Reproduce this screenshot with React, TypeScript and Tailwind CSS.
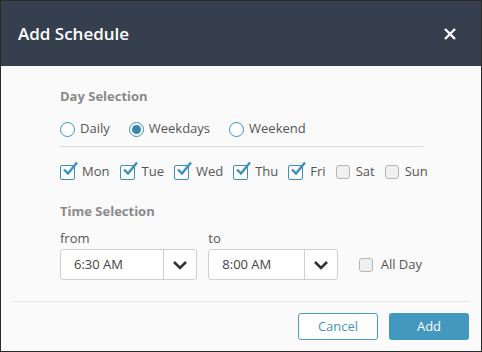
import { useState } from "react";

const days = ["Mon", "Tue", "Wed", "Thu", "Fri", "Sat", "Sun"];

function CheckBox({ checked }: { checked: boolean }) {
  if (!checked) {
    return <span className="w-[14px] h-[14px] rounded-[3px] border border-[#b5b5b5] bg-[#f0f0f0] inline-block shrink-0" />;
  }
  return (
    <span className="relative w-[16px] h-[16px] inline-block shrink-0">
      <span className="absolute left-0 top-[1px] w-[15px] h-[15px] rounded-[2px] border-[1.5px] border-[#3b8fbf] bg-white" />
      <svg className="absolute -top-[3px] left-[2px]" width="17" height="16" viewBox="0 0 17 16">
        <path d="M2 8.5 L6 12.5 L15 1.5" fill="none" stroke="#3b8fbf" strokeWidth="2.4" />
      </svg>
    </span>
  );
}

function Radio({ on }: { on: boolean }) {
  return (
    <span className="w-[15px] h-[15px] rounded-full border border-[#3b8fbf] bg-white flex items-center justify-center">
      {on && <span className="w-[9px] h-[9px] rounded-full bg-[#3b86b0]" />}
    </span>
  );
}

function TimeSelect({ value }: { value: string }) {
  return (
    <div className="flex h-[31px] border border-[#cfcfcf] rounded-[3px] bg-white">
      <div className="flex-1 flex items-center pl-[13px] text-[13px] text-[#444]">{value}</div>
      <div className="w-[33px] border-l border-[#cfcfcf] flex items-center justify-center">
        <svg width="16" height="10" viewBox="0 0 16 10">
          <path d="M2 2 L8 8 L14 2" fill="none" stroke="#333" strokeWidth="2.6" />
        </svg>
      </div>
    </div>
  );
}

export default function App() {
  const [mode] = useState("Weekdays");
  const checked = ["Mon", "Tue", "Wed", "Thu", "Fri"];

  return (
    <div
      className="w-[482px] h-[352px] border border-[#2a2a2a] bg-[#fafafa] flex flex-col"
      style={{ fontFamily: '"Open Sans", "Noto Sans", sans-serif' }}
    >
      <div className="h-[65px] bg-[#363f4d] flex items-center justify-between pl-[17px] pr-[25px]">
        <h1 className="text-white text-[17px] font-semibold">Add Schedule</h1>
        <svg width="12" height="12" viewBox="0 0 12 12">
          <path d="M1 1 L11 11 M11 1 L1 11" stroke="white" strokeWidth="2.4" />
        </svg>
      </div>

      <div className="pl-[59px] pr-[59px] pt-[21px] flex flex-col">
        <div className="text-[13px] font-bold text-[#8a8a8a] leading-[18px]">Day Selection</div>

        <div className="flex items-center mt-[14px] h-[20px] text-[13px] text-[#555]">
          {["Daily", "Weekdays", "Weekend"].map((m) => (
            <label key={m} className="flex items-center gap-[5px] mr-[19px]">
              <Radio on={m === mode} />
              <span>{m}</span>
            </label>
          ))}
        </div>

        <div className="h-px bg-[#d8d8d8] mt-[7px] w-[363px]" />

        <div className="flex items-center mt-[16px] h-[18px] text-[13px] text-[#555] whitespace-nowrap">
          {days.map((d) => (
            <label key={d} className="flex items-center gap-[6px] mr-[10px]">
              <CheckBox checked={checked.includes(d)} />
              <span>{d}</span>
            </label>
          ))}
        </div>

        <div className="text-[13px] font-bold text-[#8a8a8a] leading-[18px] mt-[21px]">Time Selection</div>

        <div className="flex mt-[9px] items-end">
          <div className="w-[139px] flex flex-col">
            <span className="text-[13px] text-[#555] leading-[18px] mb-[2px]">from</span>
            <TimeSelect value="6:30 AM" />
          </div>
          <div className="w-[131px] ml-[11px] flex flex-col">
            <span className="text-[13px] text-[#555] leading-[18px] mb-[2px]">to</span>
            <TimeSelect value="8:00 AM" />
          </div>
          <label className="flex items-center gap-[8px] ml-[21px] h-[31px] text-[13px] text-[#555] whitespace-nowrap">
            <CheckBox checked={false} />
            <span>All Day</span>
          </label>
        </div>
      </div>

      <div className="h-px bg-[#e6e6e6] mx-[12px] mt-[21px]" />

      <div className="flex justify-end gap-[11px] pr-[12px] mt-[11px]">
        <button className="w-[80px] h-[27px] rounded-[3px] border border-[#4a9cc4] bg-white text-[#4a93bd] text-[13px]">
          Cancel
        </button>
        <button className="w-[80px] h-[27px] rounded-[3px] bg-[#4398c0] text-white text-[13px]">Add</button>
      </div>
    </div>
  );
}
